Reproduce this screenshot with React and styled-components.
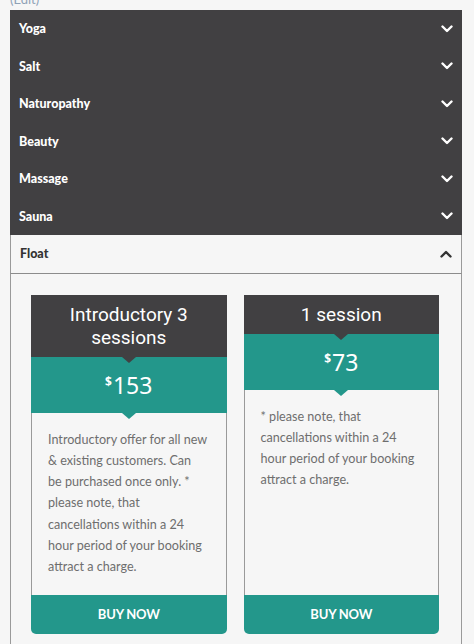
import React, { useState } from 'react';
import styled, { createGlobalStyle } from 'styled-components';

const GlobalStyle = createGlobalStyle`
  html, body {
    margin: 0;
    padding: 0;
    background: #f6f6f6;
  }
  body {
    font-family: "Lato", "Open Sans", sans-serif;
  }
`;

const Page = styled.div`
  width: 474px;
  height: 644px;
  overflow: hidden;
  background: #f6f6f6;
`;

const EditLink = styled.div`
  margin: -11px 0 0 10px;
  height: 21px;
  font-family: "Lato", sans-serif;
  font-size: 13px;
  line-height: 21px;
  color: #8fa2b6;
`;

const Accordion = styled.div`
  margin: 0 12px 0 10px;
`;

const Header = styled.div`
  height: ${({ $open }) => ($open ? '38.5px' : '37.5px')};
  box-sizing: border-box;
  display: flex;
  align-items: center;
  justify-content: space-between;
  padding: 0 9px;
  background: ${({ $open }) => ($open ? '#f6f6f6' : '#414042')};
  color: ${({ $open }) => ($open ? '#333333' : '#ffffff')};
  border-left: ${({ $open }) => ($open ? '1px solid #9a9a9a' : 'none')};
  border-right: ${({ $open }) => ($open ? '1px solid #9a9a9a' : 'none')};
  border-bottom: ${({ $open }) => ($open ? '1px solid #8c8c8c' : 'none')};
  font-family: "Lato", sans-serif;
  font-weight: 900;
  font-size: 12.5px;
  cursor: pointer;
`;

const Chevron = ({ up, color }) => (
  <svg width="12" height="8" viewBox="0 0 12 8">
    <path
      d={up ? 'M1.5 6.5 L6 2 L10.5 6.5' : 'M1.5 1.5 L6 6 L10.5 1.5'}
      fill="none"
      stroke={color}
      strokeWidth="2.4"
      strokeLinecap="round"
      strokeLinejoin="round"
    />
  </svg>
);

const Panel = styled.div`
  border-left: 1px solid #9a9a9a;
  border-right: 1px solid #9a9a9a;
  background: #f6f6f6;
  padding: 21px 22px 40px 20px;
  display: grid;
  grid-template-columns: 1fr 1fr;
  gap: 17px;
`;

const Card = styled.div`
  display: flex;
  flex-direction: column;
  border-radius: 0 0 5px 5px;
  overflow: hidden;
  background: #f6f6f6;
`;

const Title = styled.div`
  background: #414042;
  color: #ffffff;
  text-align: center;
  font-family: "Roboto", sans-serif;
  font-weight: 400;
  font-size: 19px;
  line-height: 23px;
  padding: 8px 10px;
  position: relative;
`;

const Notch = styled.span`
  position: absolute;
  left: 50%;
  bottom: -6px;
  margin-left: -7px;
  width: 0;
  height: 0;
  border-left: 7px solid transparent;
  border-right: 7px solid transparent;
  border-top: 6px solid ${({ $color }) => $color};
  z-index: 2;
`;

const Price = styled.div`
  background: #23978b;
  color: #ffffff;
  text-align: center;
  height: 56px;
  display: flex;
  align-items: center;
  justify-content: center;
  font-family: "Noto Sans", "Open Sans", sans-serif;
  font-size: 23px;
  position: relative;
  sup {
    font-size: 12px;
    font-weight: 700;
    position: relative;
    top: -3px;
    margin-right: 1px;
  }
`;

const Body = styled.div`
  flex: 1;
  border-left: 1px solid #9a9a9a;
  border-right: 1px solid #9a9a9a;
  padding: 16px 15px 17px 16px;
  font-family: "Lato", sans-serif;
  font-size: 12.6px;
  line-height: 21.3px;
  color: #6e6e6e;
  white-space: pre-line;
`;

const BuyButton = styled.button`
  height: 39px;
  border: none;
  background: #23978b;
  color: #ffffff;
  font-family: "Lato", sans-serif;
  font-weight: 700;
  font-size: 13px;
  letter-spacing: -0.2px;
  cursor: pointer;
`;

const categories = ['Yoga', 'Salt', 'Naturopathy', 'Beauty', 'Massage', 'Sauna'];

const plans = [
  {
    title: ['Introductory 3', 'sessions'],
    price: 153,
    text: 'Introductory offer for all new\n& existing customers. Can\nbe purchased once only. *\nplease note, that\ncancellations within a 24\nhour period of your booking\nattract a charge.',
  },
  {
    title: ['1 session'],
    price: 73,
    text: '* please note, that\ncancellations within a 24\nhour period of your booking\nattract a charge.',
  },
];

const PlanCard = ({ plan }) => (
  <Card>
    <Title>
      {plan.title.map((line, i) => (
        <React.Fragment key={line}>
          {i > 0 && <br />}
          {line}
        </React.Fragment>
      ))}
      <Notch $color="#414042" />
    </Title>
    <Price>
      <sup>$</sup>
      {plan.price}
      <Notch $color="#23978b" />
    </Price>
    <Body>{plan.text}</Body>
    <BuyButton>BUY NOW</BuyButton>
  </Card>
);

const App = () => {
  const [open, setOpen] = useState('Float');

  return (
    <Page>
      <GlobalStyle />
      <EditLink>(Edit)</EditLink>
      <Accordion>
        {categories.map((name) => (
          <Header key={name} onClick={() => setOpen(name)}>
            {name}
            <Chevron color="#ffffff" />
          </Header>
        ))}
        <Header $open onClick={() => setOpen(open === 'Float' ? '' : 'Float')}>
          Float
          <Chevron up color="#333333" />
        </Header>
        <Panel>
          {plans.map((p) => (
            <PlanCard key={p.price} plan={p} />
          ))}
        </Panel>
      </Accordion>
    </Page>
  );
};

export default App;
